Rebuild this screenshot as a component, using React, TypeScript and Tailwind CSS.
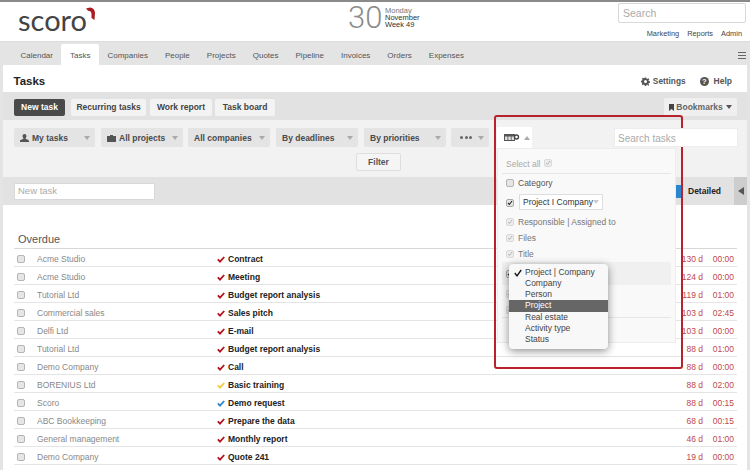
import React from "react";

const rows: [string, string, string, string, string][] = [
  ["Acme Studio", "Contract", "130 d", "00:00", "#b5121b"],
  ["Acme Studio", "Meeting", "124 d", "00:00", "#b5121b"],
  ["Tutorial Ltd", "Budget report analysis", "119 d", "01:00", "#b5121b"],
  ["Commercial sales", "Sales pitch", "103 d", "02:45", "#b5121b"],
  ["Delfi Ltd", "E-mail", "103 d", "00:00", "#b5121b"],
  ["Tutorial Ltd", "Budget report analysis", "88 d", "01:00", "#b5121b"],
  ["Demo Company", "Call", "88 d", "00:00", "#b5121b"],
  ["BORENIUS Ltd", "Basic training", "88 d", "02:00", "#f5c93a"],
  ["Scoro", "Demo request", "88 d", "00:15", "#2b86d0"],
  ["ABC Bookkeeping", "Prepare the data", "68 d", "00:15", "#b5121b"],
  ["General management", "Monthly report", "46 d", "01:00", "#b5121b"],
  ["Demo Company", "Quote 241", "19 d", "00:00", "#b5121b"],
];

const nav = ["Calendar", "Tasks", "Companies", "People", "Projects", "Quotes", "Pipeline", "Invoices", "Orders", "Expenses"];

const Caret = ({ c = "#9a9a9a" }: { c?: string }) => (
  <svg width="6" height="4" viewBox="0 0 6 4" className="shrink-0"><path d="M0 0h6L3 4z" fill={c} /></svg>
);

const Check = ({ c }: { c: string }) => (
  <svg width="8" height="7" viewBox="0 0 8 7" className="shrink-0"><path d="M.8 3.4 3 5.6 7.2 1" fill="none" stroke={c} strokeWidth="1.8" /></svg>
);

const Box = () => <div className="w-[8px] h-[8px] rounded-[2px] border border-[#b4b4b4] bg-[#e6e6e6] shrink-0" />;

const DimCheck = () => (
  <div className="w-[8px] h-[8px] rounded-[2px] border border-[#dadada] bg-[#ececec] shrink-0 flex items-center justify-center">
    <svg width="6" height="6" viewBox="0 0 6 6"><path d="M1 3l1.400 1.500L5 1" fill="none" stroke="#b5b5b5" strokeWidth="1" /></svg>
  </div>
);

const OnCheck = () => (
  <div className="w-[8px] h-[8px] rounded-[2px] border border-[#a8a8a8] bg-[#e6e6e6] shrink-0 flex items-center justify-center">
    <svg width="6" height="6" viewBox="0 0 6 6"><path d="M1 3l1.400 1.500L5 1" fill="none" stroke="#222" strokeWidth="1.100" /></svg>
  </div>
);

const Filter = ({ w, icon, label, ml }: { w: string; icon?: React.ReactNode; label: string; ml: string }) => (
  <div className={`${w} ${ml} h-[19px] bg-[#e4e4e4] rounded-[2px] flex items-center pl-[6px] pr-[5px] pt-[1px] shrink-0`}>
    {icon}
    <span className="font-bold text-[8.5px] leading-[10px] text-[#4a4a4a] flex-1">{label}</span>
    <Caret c="#aaa" />
  </div>
);

const Btn = ({ w, label, ml, dark }: { w: string; label: string; ml: string; dark?: boolean }) => (
  <div className={`${w} ${ml} h-[17px] rounded-[2px] flex items-center justify-center font-bold text-[8.5px] shrink-0 ${dark ? "bg-[#4a4a4a] text-white" : "bg-[#f3f3f3] text-[#444]"}`}>
    {label}
  </div>
);

export default function App() {
  return (
    <div className="relative w-[750px] h-[470px] overflow-hidden bg-[#e4e4e4] font-['Liberation_Sans',sans-serif] text-[#444]">
      <div className="h-[2px] bg-[#8a8a8a]" />

      {/* Top bar */}
      <div className="h-[39px] bg-white flex pl-[18px] pr-[4px]">
        <div className="w-[70px] h-full flex items-start shrink-0">
          <span className="font-['Lato',sans-serif] text-[29px] leading-[34px] text-[#444] mt-[1px]">scoro</span>
          <svg width="10" height="14" viewBox="0 0 10 14" className="mt-[5px] -ml-[1px] shrink-0"><path d="M0 1.500 4 .5C7 .8 9 3 9 6L8.500 13 5.500 11V7C5.500 5 4 3.800 2 3.800z" fill="#a81c22" /></svg>
        </div>
        <div className="ml-[260px] flex items-start shrink-0">
          <span className="font-['Roboto',sans-serif] font-light text-[31px] leading-[32px] text-[#8c8c8c] w-[37px]">30</span>
          <div className="text-[7.5px] leading-[7px] mt-[5px] w-[60px]">
            <div className="text-[#777]">Monday</div>
            <div className="text-[#333]">November</div>
            <div className="text-[#333]">Week 49</div>
          </div>
        </div>
        <div className="ml-auto w-[128px] flex flex-col shrink-0">
          <div className="h-[20px] mt-[1px] bg-white border border-[#d8d8d8] rounded-[2px] flex items-center pl-[4px] pt-[1px] text-[10.5px] text-[#aaa]">Search</div>
          <div className="flex justify-end gap-[8px] text-[7.400px] text-[#444] mt-[6px] pr-[4px] leading-[9px]">
            <span>Marketing</span><span>Reports</span><span>Admin</span>
          </div>
        </div>
      </div>

      {/* Nav */}
      <div className="h-[24px] flex items-end pl-[12px] pr-[4px] border-t border-[#dcdcdc]">
        {nav.map((n) => (
          <div key={n} className={`h-[21px] px-[8.5px] pt-[2px] flex items-center text-[8px] text-[#555] ${n === "Tasks" ? "bg-white rounded-t-[2px]" : ""}`}>{n}</div>
        ))}
        <div className="ml-auto mb-[6px] flex flex-col gap-[1.5px] w-[8px]">
          <div className="h-[1.5px] bg-[#666]" /><div className="h-[1.5px] bg-[#666]" /><div className="h-[1.5px] bg-[#666]" />
        </div>
      </div>

      {/* Main */}
      <div className="mx-[3px]">
        <div className="h-[27px] bg-white flex items-center pl-[10.5px] pr-[15px] pt-[6px]">
          <span className="font-bold text-[11.5px] text-[#222]">Tasks</span>
          <svg width="9" height="9" viewBox="0 0 24 24" className="ml-auto -mt-[1px]"><path fill="#555" fillRule="evenodd" d="M10 1h4l.6 3 2.300 1 2.600-1.700 2.800 2.800L20 8.700l1 2.300 3 .6v4l-3 .6-1 2.300 1.700 2.600-2.800 2.800L16.900 20l-2.300 1-.6 3h-4l-.6-3-2.300-1-2.600 1.700-2.800-2.800L3.400 17l-1-2.300L0 14v-4l3-.6 1-2.300L2.300 4.500l2.800-2.800L7.700 3.400 10 2.400zM12 8a4 4 0 1 0 0 8 4 4 0 0 0 0-8z" /></svg>
          <span className="font-bold text-[8.3px] text-[#555] ml-[3px] -mt-[1px]">Settings</span>
          <div className="ml-[14px] w-[9.500px] h-[9.500px] rounded-full bg-[#555] text-white text-[7.500px] font-bold flex items-center justify-center leading-none">?</div>
          <span className="font-bold text-[8.5px] text-[#555] ml-[4.500px]">Help</span>
        </div>

        {/* Toolbar */}
        <div className="h-[28px] bg-[#e2e2e2] flex items-center pl-[11px] pr-[10px] pt-[2px]">
          <Btn w="w-[51px]" label="New task" ml="" dark />
          <Btn w="w-[75px]" label="Recurring tasks" ml="ml-[6px]" />
          <Btn w="w-[62px]" label="Work report" ml="ml-[4px]" />
          <Btn w="w-[60px]" label="Task board" ml="ml-[3px]" />
          <div className="ml-auto w-[73px] h-[18px] bg-[#efefef] rounded-[2px] flex items-center justify-center gap-[2px] text-[8.5px] font-bold text-[#666]">
            <svg width="5" height="7" viewBox="0 0 5 7"><path d="M0 0h5v7L2.500 5 0 7z" fill="#444" /></svg>
            Bookmarks
            <span className="ml-[1px]"><Caret c="#555" /></span>
          </div>
        </div>

        {/* Filters */}
        <div className="h-[57px] bg-[#f2f2f2] pt-[8px]">
          <div className="flex pl-[11px]">
            <Filter w="w-[81px]" ml="" label="My tasks" icon={<svg width="9" height="8" viewBox="0 0 9 8" className="mr-[3px] shrink-0"><path d="M4.500 0a2 2 0 0 1 2 2c0 1.200-.8 2-1 2.500 0 .6 3.500 1 3.500 2.500v1H0V7c0-1.500 3.500-1.900 3.500-2.500-.2-.5-1-1.300-1-2.500a2 2 0 0 1 2-2z" fill="#555" /></svg>} />
            <Filter w="w-[82px]" ml="ml-[6px]" label="All projects" icon={<svg width="9" height="7" viewBox="0 0 9 7" className="mr-[3px] shrink-0"><path d="M3 1V0h3v1h3v6H0V1z" fill="#555" /></svg>} />
            <Filter w="w-[82px]" ml="ml-[5px]" label="All companies" />
            <Filter w="w-[82px]" ml="ml-[6px]" label="By deadlines" />
            <Filter w="w-[82px]" ml="ml-[6px]" label="By priorities" />
            <div className="w-[38px] ml-[5px] h-[19px] bg-[#e4e4e4] rounded-[2px] flex items-center pl-[9px] pr-[5px] shrink-0">
              <span className="flex-1 flex gap-[1.500px]">
                <i className="w-[3px] h-[3px] rounded-full bg-[#666]" /><i className="w-[3px] h-[3px] rounded-full bg-[#666]" /><i className="w-[3px] h-[3px] rounded-full bg-[#666]" />
              </span>
              <Caret c="#aaa" />
            </div>
          </div>
          <div className="mt-[6px] ml-[353px] w-[45px] h-[18px] bg-[#f5f5f5] border border-[#dedede] rounded-[2px] flex items-center justify-center font-bold text-[8.5px] text-[#555]">Filter</div>
        </div>

        {/* New task bar */}
        <div className="h-[28px] bg-[#e2e2e2] flex items-center pl-[11px] relative">
          <div className="w-[141px] h-[17px] bg-white border border-[#d8d8d8] rounded-[1px] flex items-center pl-[3px] pt-[1px] text-[9.5px] text-[#aaa]">New task</div>
          <div className="ml-auto flex items-center h-full">
            <div className="w-[5px] h-[13px] bg-[#2b86d0]" />
            <span className="font-bold text-[8.5px] text-[#222] ml-[7px] w-[46px] pt-[1px]">Detailed</span>
            <div className="w-[13px] h-full bg-[#cdcdcd] flex items-center justify-center">
              <svg width="6" height="8" viewBox="0 0 6 8"><path d="M6 0v8L0 4z" fill="#555" /></svg>
            </div>
          </div>
        </div>

        {/* Table */}
        <div className="h-[265px] bg-white pl-[11px] pr-[10px] pt-[26px]">
          <div className="h-[18px] text-[11px] text-[#555] pl-[4px] leading-[16px] border-b border-[#d8d8d8]">Overdue</div>
          {rows.map((r, i) => (
            <div key={i} className="h-[18px] pt-[3px] flex items-center border-b border-[#e4e4e4] text-[8.5px]">
              <div className="ml-[3px]"><Box /></div>
              <span className="ml-[12px] w-[180px] text-[#888] shrink-0">{r[0]}</span>
              <Check c={r[4]} />
              <span className="ml-[3px] font-bold text-[#222] w-[400px] shrink-0">{r[1]}</span>
              <span className="ml-auto text-[#c0474d] w-[30px] text-right">{r[2]}</span>
              <span className="text-[#c0474d] w-[34px] text-right pr-[3px]">{r[3]}</span>
            </div>
          ))}
        </div>
      </div>

      {/* Highlight frame with column chooser */}
      <div className="absolute left-[494px] top-[115px] w-[189px] h-[254px] border-[2px] border-[#b8222c] rounded-[3px]">
        <div className="absolute left-[1px] top-[10px] w-[35px] h-[21px] bg-white flex items-center pl-[7px] gap-[4px] pt-[1px]">
          <svg width="16" height="8" viewBox="0 0 16 8"><path d="M0 0h11v7H0z" fill="#555" /><path d="M1 2.500h2.500v3.500H1zM4.300 2.500h2.500v3.500H4.300zM7.600 2.500h2.500v3.500H7.600z" fill="#ddd" /><circle cx="12.500" cy="3" r="2" fill="#fff" stroke="#444" strokeWidth="1.400" /></svg>
          <svg width="6" height="4" viewBox="0 0 6 4"><path d="M0 4h6L3 0z" fill="#aaa" /></svg>
        </div>
        <div className="absolute left-[1px] top-[31px] w-[179px] h-[195px] bg-[#f9f9f9] border border-[#ececec] px-[4px] text-[8.500px] leading-[10px] text-[#555]">
          <div className="h-[25px] flex items-end pb-[4px] pl-[4px] gap-[3px] text-[#aaa] border-b border-[#e6e6e6]">
            Select all <div className="mb-[2px]"><DimCheck /></div>
          </div>
          <div className="h-[18px] flex items-center pl-[4px] gap-[4px]"><Box /><span>Category</span></div>
          <div className="h-[22px] flex items-center pl-[4px] gap-[5px] text-[#333]">
            <OnCheck />
            <div className="w-[84px] h-[16px] -mt-[2px] bg-white border border-[#dedede] flex items-center pl-[3px] pr-[4px]">
              <span className="flex-1 whitespace-nowrap">Project I Company</span>
              <Caret c="#ccc" />
            </div>
          </div>
          <div className="h-[16px] flex items-center pl-[4px] gap-[4px] text-[#777]"><DimCheck /><span>Responsible | Assigned to</span></div>
          <div className="h-[16px] flex items-center pl-[4px] gap-[4px] text-[#777]"><DimCheck /><span>Files</span></div>
          <div className="h-[16px] flex items-center pl-[4px] gap-[4px] text-[#777]"><DimCheck /><span>Title</span></div>
          <div className="h-[23px] bg-[#f0f0f0] flex items-center pl-[4px]"><OnCheck /></div>
          <div className="h-[17px] flex items-center pl-[4px]"><DimCheck /></div>
          <div className="h-[16px] flex items-center pl-[4px] border-b border-[#e6e6e6]"><DimCheck /></div>
        </div>
        <div className="absolute left-[13px] top-[147px] w-[99px] h-[85px] bg-[#f8f8f8] rounded-[4px] shadow-[0_2px_8px_rgba(0,0,0,0.45)] pt-[2.500px] text-[8.500px] text-[#444] leading-[11.300px]">
          <div className="h-[11.300px] pl-[16px] relative">
            <svg width="8" height="8" viewBox="0 0 8 8" className="absolute left-[5px] top-[2px]"><path d="M.8 4 3 6.800 7.200 1" fill="none" stroke="#111" strokeWidth="1.300" /></svg>
            Project | Company
          </div>
          <div className="h-[11.300px] pl-[16px]">Company</div>
          <div className="h-[11.300px] pl-[16px]">Person</div>
          <div className="h-[11.300px] pl-[16px] bg-[#666] text-white">Project</div>
          <div className="h-[11.300px] pl-[16px]">Real estate</div>
          <div className="h-[11.300px] pl-[16px]">Activity type</div>
          <div className="h-[11.300px] pl-[16px]">Status</div>
        </div>
      </div>
      <div className="absolute left-[614px] top-[128px] w-[124px] h-[19px] bg-white border border-[#ededed] flex items-center pl-[3px] pt-[1px] text-[10px] text-[#aaa]">Search tasks</div>
    </div>
  );
}
